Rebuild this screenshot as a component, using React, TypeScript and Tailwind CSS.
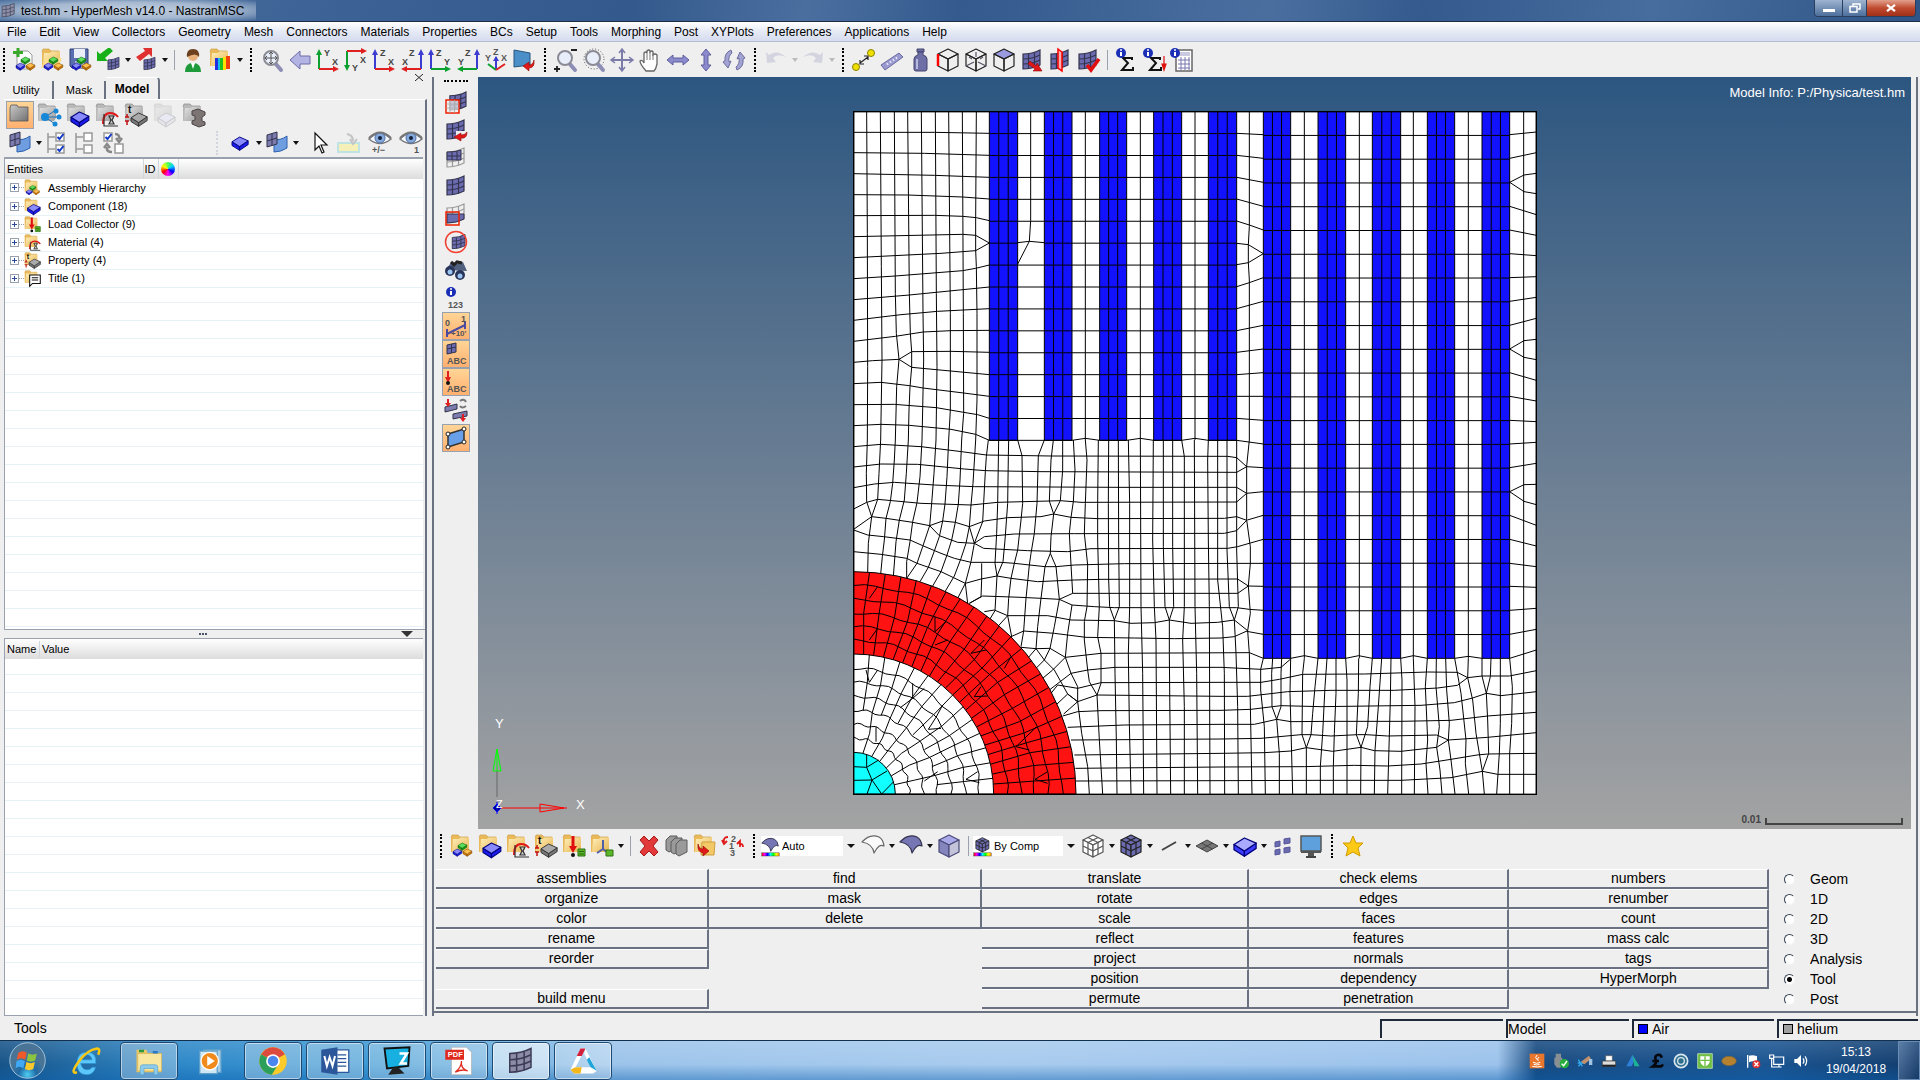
import type { ReactNode } from 'react';
import { clsx } from 'clsx';

/* ---------- icon primitives, all on a 24x24 grid ---------- */

const G = '#6b6bb0';
const INK = '#33334d';

function Svg({ children, size = 24 }: { children: ReactNode; size?: number }) {
  return (
    <svg width={size} height={size} viewBox="0 0 24 24" fill="none" className="shrink-0 overflow-visible" aria-hidden="true">
      {children}
    </svg>
  );
}

function Folder({ gray = false }: { gray?: boolean }) {
  return (
    <g>
      <path d="M1 4l1-3h6l2 2h8v13l-2 2H1z" fill={gray ? '#b9b9b9' : '#e9b95a'} />
      <path d="M3 5h6l2-2h8v12l-2 3H2z" fill={gray ? 'url(#folderGray)' : 'url(#folderGold)'} />
      <path d="M1 4l1-3h6l2 2h8" stroke={gray ? '#8a8a8a' : '#cfa04a'} strokeWidth=".7" />
    </g>
  );
}

function Slab({ x = 0, y = 0, s = 1, top = '#8a8aff', side = '#1c1cf0', edge = '#00007a' }: { x?: number; y?: number; s?: number; top?: string; side?: string; edge?: string }) {
  return (
    <g transform={`translate(${x} ${y}) scale(${s})`} stroke={edge} strokeWidth="1" strokeLinejoin="round">
      <path d="M0 5v4l8 5v-4z" fill={side} />
      <path d="M17 4v4l-9 6v-4z" fill={side} />
      <path d="M0 5l8-5 9 4-9 6z" fill={top} />
    </g>
  );
}

function Cubes() {
  return (
    <g>
      <Slab x={8} y={9} s={0.52} top="#5be05b" side="#17a017" edge="#0b5a0b" />
      <Slab x={3} y={15} s={0.52} />
      <Slab x={13} y={15} s={0.52} top="#ffc04d" side="#d87a00" edge="#7a4300" />
    </g>
  );
}

function Sheet({ x = 0, y = 0, s = 1, fill = G, line = INK }: { x?: number; y?: number; s?: number; fill?: string; line?: string }) {
  return (
    <g transform={`translate(${x} ${y}) scale(${s})`} stroke={line} strokeWidth="1.2">
      <path d="M3 6Q12 6 20 2V17Q12 21 3 21Z" fill={fill} />
      <path d="M3 11Q12 11 20 7M3 16Q12 16 20 12M8.500 6V21M14.500 4.500V19.500" />
    </g>
  );
}

const RedArrow = ({ d = 'M10 13l6 5 1-3 5 8-9 0 2-2-7-5z' }: { d?: string }) => <path d={d} fill="#e01818" stroke="#8e0a0a" strokeWidth=".6" />;

function Axes({ v, h, vl, hl, right = false, down = false }: { v: string; h: string; vl: string; hl: string; right?: boolean; down?: boolean }) {
  const x = right ? 21 : 3;
  const y = down ? 3 : 21;
  const d = right ? -1 : 1;
  const u = down ? 1 : -1;
  return (
    <g>
      <path d={`M${x} ${y}V${y + u * 15}M${x} ${y}`} stroke={v} strokeWidth="2" />
      <path d={`M${x - 3} ${y + u * 14}l3 ${u * 6} 3 ${-u * 6}z`} fill={v} />
      <path d={`M${x} ${y}H${x + d * 15}`} stroke={h} strokeWidth="2" />
      <path d={`M${x + d * 14} ${y - 3}l${d * 6} 3 ${-d * 6} 3z`} fill={h} />
      <g fontSize="9" fontWeight="700" fontFamily="Liberation Sans, sans-serif" fill="#444">
        <text x={right ? 9 : 8} y={down ? 23 : 8}>{vl}</text>
        <text x={right ? 2 : 16} y={down ? 15 : 17}>{hl}</text>
      </g>
    </g>
  );
}

function Cube({ top = 'none', front = 'none', side = 'none', line = '#222', children }: { top?: string; front?: string; side?: string; line?: string; children?: ReactNode }) {
  return (
    <g stroke={line} strokeLinejoin="round" strokeWidth="1.200">
      <path d="M2 6l10-5 10 5-10 5z" fill={top} />
      <path d="M2 6l10 5v12L2 18z" fill={front} />
      <path d="M22 6l-10 5v12l10-5z" fill={side} />
      {children}
    </g>
  );
}

const GridCube = ({ fill, line = '#222' }: { fill: string; line?: string }) => (
  <Cube top={fill} front={fill} side={fill} line={line}>
    <path d="M7 3.500l10 5V20.500M17 3.500l-10 5V20.500M2 12l10 5 10-5" />
  </Cube>
);

const Patch = () => (
  <g strokeWidth="1">
    <path d="M9 8q6 2 13-3v12q-6 4-13 4z" fill="#6f9ee0" stroke="#2c5fae" />
    <path d="M2 4l10-3v12L2 16z" fill="#7c7cae" stroke={INK} />
    <path d="M7 2.500v12M2 10l10-3" stroke={INK} />
  </g>
);

const Info = ({ x = 6, y = 5 }: { x?: number; y?: number }) => (
  <g>
    <circle cx={x} cy={y} r="5" fill="#1a2fb5" />
    <path d={`M${x} ${y - 1}v4`} stroke="#fff" strokeWidth="2" />
    <circle cx={x} cy={y - 3} r="1" fill="#fff" />
  </g>
);

const Stamp = () => (
  <g stroke="#333" strokeWidth="1.200">
    <path d="M8 21q0-11 7-11 5 0 8 4" stroke="#e01818" strokeWidth="2" />
    <path d="M9 11v12h14" />
    <path d="M14 13h5l-2 4 2 4h-5l2-4z" fill="#c9c9c9" />
  </g>
);

const Thickness = () => (
  <g>
    <Slab x={7} y={10} s={0.95} top="#aaa" side="#777" edge="#333" />
    <text x="4" y="10" fontSize="10" fontWeight="700" fontFamily="Liberation Sans, sans-serif" fill="#111">t</text>
    <path d="M3 11v3M3 22v-4M1 14h4M1 18h4" stroke="#c01010" strokeWidth="1.5" />
  </g>
);

const DownLoad = () => (
  <g>
    <path d="M11 2v12" stroke="#e01010" strokeWidth="3" />
    <path d="M7 12h8l-4 7z" fill="#e01010" />
    <circle cx="11" cy="21" r="2" fill="#111" />
    <path d="M16 15h7v7h-7z" fill="#5cb82a" stroke="#2d7010" />
    <path d="M17 17.500h5M17 20h5" stroke="#1d5008" strokeWidth=".8" />
  </g>
);

const Lens = ({ dotted = false }: { dotted?: boolean }) => (
  <g>
    {dotted && <circle cx="12" cy="11" r="10" stroke="#555" strokeDasharray="1 2" />}
    <path d="M15 15l6 7" stroke="#8d8db5" strokeWidth="4" strokeLinecap="round" />
    <circle cx="11" cy="10" r="7" fill="#e9effa" stroke="#8b8b95" strokeWidth="2" />
  </g>
);

const Eye = () => (
  <g>
    <path d="M1 8Q12-3 23 8 12 17 1 8z" fill="#f4f8ff" stroke="#777" strokeWidth="1.500" />
    <circle cx="12" cy="7" r="5" fill="#86a9dc" stroke="#4f6fa6" />
    <circle cx="12" cy="7" r="2" fill="#14213d" />
    <path d="M1 7Q12-4 23 7" stroke="#777" strokeWidth="2" />
  </g>
);

const Rainbow = () => <rect x="1" y="20" width="22" height="4" fill="url(#rainbow)" stroke="#333" strokeWidth=".5" />;
const Arc = ({ fill = '#7676b5', line = '#33334d' }: { fill?: string; line?: string }) => (
  <path d="M1 8Q9-1 18 3q4 2 5 9-5-3-10 7-1-9-12-11z" fill={fill} stroke={line} strokeWidth="1.200" strokeLinejoin="round" />
);
const T = ({ x, y, s = 9, c = '#555', children }: { x: number; y: number; s?: number; c?: string; children: string }) => (
  <text x={x} y={y} fontSize={s} fontWeight="700" fontFamily="Liberation Sans, sans-serif" fill={c}>{children}</text>
);
const Sigma = () => <path d="M18 12V10H9l5 5-6 7h11v-3" stroke="#111" strokeWidth="2" />;
const Tree = ({ on }: { on: boolean }) => (
  <g stroke="#999" strokeWidth="1.500">
    <path d="M3 2v20M3 6h7M3 18h7" />
    <path d="M11 2h8v8h-8zM11 14h8v8h-8z" fill="#fff" />
    {on && <path d="M12.500 6l2 2 4-5M12.500 18l2 2 4-5" stroke="#1238c8" strokeWidth="2" />}
  </g>
);

/* ---------- toolbar building blocks ---------- */

function Tool({ label, children, active = false }: { label: string; children: ReactNode; active?: boolean }) {
  return (
    <button
      type="button"
      aria-label={label}
      className={clsx('flex h-7 w-7 shrink-0 items-center justify-center', active && 'border border-gray-400 bg-gradient-to-b from-[#ffd596] to-[#ffb070]')}
    >
      <Svg>{children}</Svg>
    </button>
  );
}

function Caret({ dim = false, wide = false }: { dim?: boolean; wide?: boolean }) {
  return (
    <span className={clsx('flex shrink-0 justify-center', wide ? 'w-[10px]' : 'w-[9px]')}>
      <svg width="6" height="4" viewBox="0 0 6 4" aria-hidden="true">
        <path d="M0 0h6L3 4z" fill={dim ? '#bbb' : '#111'} />
      </svg>
    </span>
  );
}

const Grip = () => (
  <span className="flex w-[14px] shrink-0 justify-center">
    <span className="h-6 border-l-2 border-dotted border-black" />
  </span>
);

const Sep = () => (
  <span className="flex w-[10px] shrink-0 justify-center">
    <span className="h-5 border-l border-gray-400" />
  </span>
);

const MENUS = ['File', 'Edit', 'View', 'Collectors', 'Geometry', 'Mesh', 'Connectors', 'Materials', 'Properties', 'BCs', 'Setup', 'Tools', 'Morphing', 'Post', 'XYPlots', 'Preferences', 'Applications', 'Help'];

const RED = '#e02020';
const GREEN = '#0ca030';
const BLUE = '#3c3cd0';

function TitleBar() {
  return (
    <header className="flex h-[22px] shrink-0 items-start justify-between overflow-hidden border-b border-[#1c2c44] bg-[linear-gradient(100deg,#4a6f9e_0%,#3b6094_20%,#34598c_33%,#4a6f9f_42%,#345a8e_50%,#4a6f9f_66%,#345a8e_74%,#476d9e_86%,#2f5588_100%)]">
      <div className="flex h-[21px] items-center gap-1 bg-[radial-gradient(ellipse_at_center,#c3d0e0_0%,#a5b8d0_55%,transparent_100%)] pr-3">
        <Svg size={17}><Sheet fill="#8d90a8" line="#4b4f66" /></Svg>
        <h1 className="text-xs">test.hm - HyperMesh v14.0 - NastranMSC</h1>
      </div>
      <div className="mr-1 flex h-[17px] overflow-hidden rounded-b border border-t-0 border-[#2a3f5f] text-white">
        <button type="button" aria-label="Minimize" className="flex w-7 items-end justify-center border-r border-[#2a3f5f] bg-gradient-to-b from-[#9eb4d0] to-[#4d6f9c] pb-1"><span className="h-[3px] w-3 bg-white" /></button>
        <button type="button" aria-label="Restore" className="flex w-6 items-center justify-center border-r border-[#2a3f5f] bg-gradient-to-b from-[#9eb4d0] to-[#4d6f9c]">
          <svg width="12" height="10" viewBox="0 0 12 10" fill="none" stroke="#fff" strokeWidth="1.500" aria-hidden="true"><path d="M4 3V1h7v5H9M1 3.500h7V9H1z" /></svg>
        </button>
        <button type="button" aria-label="Close" className="flex w-12 items-center justify-center bg-gradient-to-b from-[#e0a08c] via-[#c04a30] to-[#a03018]">
          <svg width="10" height="8" viewBox="0 0 11 9" stroke="#fff" strokeWidth="2.500" aria-hidden="true"><path d="M1 1l9 7M10 1L1 8" /></svg>
        </button>
      </div>
    </header>
  );
}

function TopToolbar() {
  return (
    <div className="flex h-[35px] shrink-0 items-center overflow-hidden">
      <span className="-ml-[3px] flex"><Grip /></span>
      <Tool label="New"><path d="M4 3h11l4 4v14H4z" fill="#fff" stroke="#999" /><path d="M5 0v9M0 4.500h10" stroke="#3aa82a" strokeWidth="3" /><Cubes /></Tool>
      <Tool label="Open"><Folder /><path d="M0 20l5-10h16l-3 8z" fill="#ffdf8e" /><Cubes /></Tool>
      <Tool label="Save"><path d="M1 1h18v19H3l-2-2z" fill="#5a6fb0" stroke="#2f3f77" /><path d="M5 1h11v9H5z" fill="#e9eef9" /><path d="M6 13h9v7H6z" fill="#aab6d6" /><Cubes /></Tool>
      <Tool label="Import"><Sheet x={9} y={8} s={0.65} /><path d="M13 0l3 3-8 7 3 3H0V3l3 3 8-6z" fill="#18b018" /></Tool><Caret />
      <Tool label="Export"><Sheet x={8} y={8} s={0.65} /><path d="M9 0h9v9l-3-3-9 7-4-4 9-6z" fill="#e03030" /></Tool><Caret />
      <Sep />
      <Tool label="User"><path d="M4 24q0-9 8-9t8 9z" fill="#1f9a3a" /><path d="M10 15l2 6 2-6z" fill="#fff" /><circle cx="12" cy="8" r="5" fill="#e8b07c" /><path d="M6 9Q5 1 12 1t6 8q-3-5-12 0z" fill="#6d4020" /></Tool>
      <Tool label="Load results"><Folder /><path d="M8 10v12h3V10z" fill="#18c0e8" /><path d="M11 10v12h3V10z" fill="#20c020" /><path d="M14 9v13h3V9z" fill="#ffe000" /><path d="M17 8v13h4V8z" fill="#f04010" /><path d="M6 10v12h3V10z" fill="#2030e0" /></Tool><Caret />
      <Grip />
      <Tool label="Fit"><Lens /><path d="M11 4v12M5 10h12M9 6l2-2 2 2M9 14l2 2 2-2M7 8l-2 2 2 2M15 8l2 2-2 2" stroke="#555" /></Tool>
      <Tool label="Previous view"><path d="M2 12l10-9v5h10v8H12v5z" fill="#b4b4e4" stroke="#6c6ca8" /></Tool>
      <Tool label="XY top"><Axes v={GREEN} h={RED} vl="Y" hl="X" /></Tool>
      <Tool label="XY bottom"><Axes v={GREEN} h={RED} vl="Y" hl="X" down /></Tool>
      <Tool label="XZ left"><Axes v={BLUE} h={RED} vl="Z" hl="X" /></Tool>
      <Tool label="XZ right"><Axes v={BLUE} h={RED} vl="Z" hl="X" right /></Tool>
      <Tool label="YZ rear"><Axes v={BLUE} h={GREEN} vl="Z" hl="Y" /></Tool>
      <Tool label="YZ front"><Axes v={BLUE} h={GREEN} vl="Z" hl="Y" right /></Tool>
      <Tool label="Isometric"><path d="M12 22V9" stroke={BLUE} strokeWidth="2" /><path d="M9 13l3-5 3 5z" fill={BLUE} /><path d="M12 22l-8-6" stroke={GREEN} strokeWidth="2" /><path d="M12 22l9-6" stroke={RED} strokeWidth="2" /><T x={9} y={7}>Z</T><T x={1} y={13}>Y</T><T x={17} y={13}>X</T></Tool>
      <Tool label="Reverse view"><path d="M2 2l16 3v12L2 19z" fill="#4b8fc8" stroke="#28557c" /><RedArrow d="M22 12q1 8-5 8v3l-6-5 6-4v3q4 0 5-5z" /></Tool>
      <Grip />
      <Tool label="Zoom in out"><Lens /><path d="M17 2h6M0 21h6M3 18v6" stroke="#222" strokeWidth="1.800" /></Tool>
      <Tool label="Circle zoom"><Lens dotted /></Tool>
      <Tool label="Center"><path d="M12 2v20M2 12h20" stroke="#7c7ca8" strokeWidth="2" /><path d="M9 5l3-4 3 4M9 19l3 4 3-4M5 9l-4 3 4 3M19 9l4 3-4 3" stroke="#7c7ca8" strokeWidth="1.500" /></Tool>
      <Tool label="Pan"><path d="M8 23q-6-7-6-10 2-2 4 2V5q2-2 3 0v-2q2-2 3 0v1q2-2 3 0v3q2-2 4 0v9q-1 5-3 7z" fill="#fff" stroke="#666" strokeWidth="1.300" /><path d="M9 5v7M12 4v8M15 6v6" stroke="#777" /></Tool>
      <Tool label="Rotate left right"><path d="M1 12l6-5v3h10V7l6 5-6 5v-3H7v3z" fill="#8a8acd" stroke="#5e5e9c" /></Tool>
      <Tool label="Rotate up down"><path d="M12 1l5 6h-3v10h3l-5 6-5-6h3V7H7z" fill="#8a8acd" stroke="#5e5e9c" /></Tool>
      <Tool label="Spin"><path d="M9 2Q2 5 3 13l-2 1 5 6 3-7-2 1Q6 8 10 5zM15 22q7-3 6-11l2-1-5-6-3 7 2-1q1 6-3 9z" fill="#a4a4d4" stroke="#6c6ca0" /></Tool>
      <Grip />
      <Tool label="Undo"><path d="M3 15L2 4l3 3q8-6 17 2-9-4-13 1l3 4z" fill="#d4d4e0" /></Tool><Caret dim />
      <Tool label="Redo"><path d="M21 15l1-11-3 3Q11 1 2 9q9-4 13 1l-3 4z" fill="#d4d4e0" /></Tool><Caret dim />
      <Grip />
      <Tool label="Distance"><path d="M8 15l8-6M8 12v4h4M12 8h4v4" stroke="#222" strokeWidth="1.200" /><circle cx="4" cy="19" r="3.500" fill="#f0e000" stroke="#8a8000" /><circle cx="19" cy="5" r="3.500" fill="#f0e000" stroke="#8a8000" /></Tool>
      <Tool label="Measure"><path d="M1 17L19 5l4 4L5 22z" fill="#9a9ad0" stroke="#6a6aa0" /><path d="M7 15l1 2M10 13l1 2M13 11l1 2M16 9l1 2" stroke="#e6e6ff" strokeWidth="1.500" /></Tool>
      <Tool label="Mass"><path d="M9 1h7v3H9z" fill="#6f6fa8" stroke="#44446f" /><path d="M10 4h5v3q4 1 4 4v10q0 2-2 2H8q-2 0-2-2V11q0-3 4-4z" fill="#6f6fa8" stroke="#44446f" /><path d="M9 11v10" stroke="#b9b9e0" strokeWidth="2" /></Tool>
      <Tool label="Edges"><Cube><path d="M2 6v12" stroke="#f00" strokeWidth="2.500" /></Cube></Tool>
      <Tool label="Features"><Cube><path d="M12 4v5M2 18l8-4M22 18l-8-4M5 9l3 2M19 9l-3 2" stroke="#556" /></Cube></Tool>
      <Tool label="Faces"><Cube top="#9a9ae0" /></Tool>
      <Tool label="Normals"><Sheet /><RedArrow /></Tool>
      <Tool label="Penetration"><Sheet /><path d="M10 1l4 3v19l-4-3z" fill="#f7b0b0" stroke="#f00" strokeWidth="1.500" /></Tool>
      <Tool label="Check elements"><Sheet /><path d="M11 17l4 5 8-11" stroke="#e01010" strokeWidth="3.500" /></Tool>
      <Sep />
      <Tool label="Summary"><Sigma /><Info x={7} /></Tool>
      <Tool label="Load summary"><Sigma /><Info x={6} /><path d="M22 8v9M20 16l2 6 2-6z" stroke="#e01010" strokeWidth="1.200" fill="#e01010" /></Tool>
      <Tool label="Calculator"><path d="M6 2h16v21H6z" fill="#fff" stroke="#666" strokeWidth="1.500" /><path d="M8 4h12v4H8z" fill="#c9c9e0" /><path d="M8 12h12M8 16h12M8 20h12M11 9v13M15 9v13M19 9v13" stroke="#7777b0" /><Info x={5} /></Tool>
    </div>
  );
}

/* ---------- model browser ---------- */

const ENTITIES: { name: string; icon: ReactNode }[] = [
  { name: 'Assembly Hierarchy', icon: <Cubes /> },
  { name: 'Component (18)', icon: <Slab x={5} y={9} s={1.05} /> },
  { name: 'Load Collector (9)', icon: <DownLoad /> },
  { name: 'Material (4)', icon: <Stamp /> },
  { name: 'Property (4)', icon: <Thickness /> },
  { name: 'Title (1)', icon: <path d="M8 7h15v12H12l-4 4v-4H8zM11 11h9M11 14h9" fill="#fff" stroke="#111" strokeWidth="1.500" /> },
];

const STRIPES = 'bg-white bg-[repeating-linear-gradient(to_bottom,transparent_0,transparent_17px,#e6f2f6_17px,#e6f2f6_18px)]';

function Browser() {
  return (
    <aside className="flex w-[427px] shrink-0 flex-col pl-1">
      <div role="tablist" className="relative flex h-[22px] shrink-0 text-[11px]">
        <button role="tab" type="button" className="mt-1 w-[50px] border-r-2 border-gray-500 pr-1">Utility</button>
        <button role="tab" type="button" className="mt-1 w-[52px] border-r-2 border-gray-500">Mask</button>
        <button role="tab" type="button" className="w-[54px] rounded-tr-sm border-t border-r-2 border-t-white border-r-gray-500 text-xs font-bold">Model</button>
        <button type="button" aria-label="Close browser" className="absolute -top-1 right-1 h-2 w-2">
          <svg width="8" height="7" viewBox="0 0 8 7" stroke="#222" aria-hidden="true"><path d="M0 0l8 7M8 0L0 7" /></svg>
        </button>
      </div>
      <div className="flex min-h-0 flex-1 flex-col border-t border-r-2 border-t-white border-r-gray-500">
        <div className="flex h-[29px] shrink-0 items-center gap-px pl-[2px]">
          <Tool label="Model view" active><path d="M2 5l1-3h6l1 2h10v14H2z" fill="url(#folderDark)" stroke="#555" strokeWidth=".8" /></Tool>
          <Tool label="Assembly view"><Folder gray /><path d="M8 14l11-7M8 14h14M8 14l10 7" stroke="#2070b8" /><circle cx="8" cy="14" r="4" fill="#1787d8" /><circle cx="19" cy="8" r="2.500" fill="#1787d8" /><circle cx="22" cy="14" r="2.500" fill="#1787d8" /><circle cx="18" cy="21" r="2.500" fill="#1787d8" /></Tool>
          <Tool label="Component view"><Folder gray /><Slab x={5} y={9} s={1.05} /></Tool>
          <Tool label="Material view"><Folder gray /><Stamp /></Tool>
          <Tool label="Property view"><Folder gray /><Thickness /></Tool>
          <Tool label="Include view"><g opacity=".3"><Folder gray /><Slab x={5} y={10} top="#ddf" side="#ccd" edge="#778" /></g></Tool>
          <Tool label="Section view"><Folder gray /><path d="M10 8l6-2 7 3v3l-3 2v4l3 1v3l-6 2-7-3v-3l3-1v-4l-3-1z" fill="#7d7474" stroke="#4c4545" /></Tool>
        </div>
        <div className="flex h-7 shrink-0 items-center">
          <div className="flex flex-1 items-center pl-[2px]">
            <Tool label="Display"><Patch /></Tool><Caret />
            <Tool label="Select all"><Tree on /></Tool>
            <Tool label="Select none"><Tree on={false} /></Tool>
            <Tool label="Reverse"><path d="M3 2h8v8H3zM14 13h8v9h-8z" fill="#fff" stroke="#999" strokeWidth="1.500" /><path d="M4.500 6l2 2 4-5" stroke="#1238c8" strokeWidth="2" /><path d="M14 3q5 0 4 5M15 7l3 4 3-4M11 21q-6 0-5-5M3 17l3-4 3 4" stroke="#888" strokeWidth="2.500" /></Tool>
          </div>
          <span className="mr-2 h-6 border-l-2 border-dotted border-gray-300" />
          <Tool label="Components"><Slab x={4} y={6} s={0.95} /></Tool><Caret />
          <Tool label="Elements and geometry"><Patch /></Tool><Caret />
          <div className="flex items-center gap-[3px] pl-1">
            <Tool label="Selector"><path d="M9 2v17l4-4 3 7 2-1-3-7h6z" fill="#fff" stroke="#111" strokeWidth="1.200" /></Tool>
            <Tool label="Add to panel"><path d="M1 12h21v9H1z" fill="#f5efb8" stroke="#bfe3e3" strokeWidth="2" /><path d="M10 3q6 1 6 7M13 8l3 5 4-5" stroke="#c4c4c4" strokeWidth="2" /></Tool>
            <Tool label="Show hide"><Eye /><T x={4} y={22}>+/−</T></Tool>
            <Tool label="Isolate"><Eye /><T x={15} y={22}>1</T></Tool>
          </div>
        </div>
        <div className={clsx('mr-[2px] min-h-0 flex-[472] border-t-2 border-l border-gray-400', STRIPES)}>
          <table className="w-full table-fixed border-collapse text-left text-[11px]">
            <colgroup><col className="w-[138px]" /><col className="w-[15px]" /><col className="w-[20px]" /><col /></colgroup>
            <thead>
              <tr className="h-5 bg-gradient-to-b from-white to-[#dcdcdc]">
                <th className="border-r border-gray-300 pl-[2px] leading-4 font-normal">Entities</th>
                <th className="border-r border-gray-300 pl-px leading-4 font-normal">ID</th>
                <th className="border-r border-gray-300" aria-label="Color"><div className="mx-auto h-[14px] w-[14px] rounded-full bg-[conic-gradient(#5f5,#0cf,#00f,#f0f,#f00,#ff0,#5f5)]" /></th>
                <th aria-label="Value" />
              </tr>
            </thead>
            <tbody className="bg-white">
              {ENTITIES.map((e) => (
                <tr key={e.name} className="h-[18px] border-b border-[#e6f2f6]">
                  <td colSpan={4} className="p-0">
                    <div className="flex h-[17px] items-center pl-[5px]">
                      <button type="button" aria-label={`Expand ${e.name}`} className="flex h-[9px] w-[9px] items-center justify-center border border-gray-400 bg-white">
                        <svg width="5" height="5" viewBox="0 0 5 5" stroke="#2a4a9a" aria-hidden="true"><path d="M0 2.500h5M2.500 0v5" /></svg>
                      </button>
                      <span className="w-[5px] border-t border-dotted border-gray-400" />
                      <Svg size={17}><Folder />{e.icon}</Svg>
                      <span className="pl-[7px] leading-4">{e.name}</span>
                    </div>
                  </td>
                </tr>
              ))}
            </tbody>
          </table>
        </div>
        <div className="flex h-[9px] shrink-0 items-center border-t border-gray-400">
          <span className="flex flex-1 justify-center"><span className="w-2 border-t-2 border-dotted border-gray-600" /></span>
          <svg width="12" height="6" viewBox="0 0 12 6" className="mr-3" aria-hidden="true"><path d="M0 0h12L6 6z" fill="#333" /></svg>
        </div>
        <div className={clsx('mr-[2px] min-h-0 flex-[378] border-y border-l border-gray-400', STRIPES)}>
          <div className="flex h-5 items-center bg-gradient-to-b from-white to-[#dcdcdc] text-[11px] leading-4">
            <span className="w-[35px] border-r border-gray-300 pl-[2px]">Name</span>
            <span className="pl-[2px]">Value</span>
          </div>
        </div>
      </div>
    </aside>
  );
}

/* ---------- mesh ---------- */

const seq = (n: number, f: (i: number) => string) => Array.from({ length: n }, (_, i) => f(i)).join('');

// Element edges, three units to a pixel; each block has its own origin.
const UPPER_LEFT = [
  '77,35 79,400 80,800 79,1020', '118,35 121,500 123,780 121,900 119,1020', '160,35 163,580 166,700 174,778 167,860 163,1020',
  '200,35 205,580 208,700 212,755 212,802 207,860 204,930 202,1020', '241,35 246,640 248,780 245,930 243,1020', '283,35 286,580 288,800 285,1020',
  '323,35 328,640 328,930 323,1020', '364,35 367,640 368,940 362,1020', '406,35 404,360 404,450 406,500 408,640 408,900 404,1020',
  '38,97 280,97 445,100', '38,158 250,160 445,166', '38,221 280,226 445,232', '38,284 200,285 365,291 445,297', '38,347 280,346 365,349 406,353 445,362',
  '38,410 365,403 404,406 445,429 404,452 300,460 38,473', '38,536 163,528 365,512 404,505 445,495', '38,599 205,585 445,561', '38,661 180,644 290,634 445,626',
  '38,724 163,709 246,696 330,692 445,691', '38,787 95,782 174,778 212,755 330,754 445,757', '174,778 212,802 445,824', '38,851 120,847 205,857 246,864 368,879 445,889',
  '38,914 160,913 286,923 368,937 410,944 445,955', '38,977 120,973 205,976 330,988 404,1003 445,1021', '38,1040 120,1033 240,1040 362,1055 436,1065 630,1068 1160,1069 1187,1073 1217,1100',
  '38,1101 120,1092 230,1093 370,1107 433,1112 600,1115 1187,1117 1217,1100', '569,35 569,362 565,424 530,492', '530,428 565,424 610,428',
  '733,35 733,1020', '898,35 898,1020', '1062,35 1062,1020', '445,1021 530,1021 610,1021 693,1021 733,1015 776,1021 857,1021 898,1015 938,1021 1022,1021 1062,1015 1102,1021 1187,1021',
];

const LOWER_LEFT = [
  '79,0 76,100 77,185 92,230 82,310 80,397', '119,0 114,100 110,178 92,230', '163,0 160,60 155,130 148,185 135,235 130,300 124,350 119,403', '202,0 196,100 190,180 175,240 165,305 157,410',
  '243,0 237,110 228,188 215,245 207,305 197,365 197,415', '285,0 279,100 272,190 266,257 245,320 228,370 197,415', '323,0 318,110 312,192 305,243 295,290 280,333 262,382 237,425',
  '362,0 357,120 352,192 343,247 332,300 318,345 300,395 275,438', '404,0 396,130 390,195 385,260 375,310 360,355 340,408 312,455', '385,260 400,310', '442,0 436,50 433,95 428,188 425,245 400,310 390,365 373,430 350,475',
  '38,143 100,132 160,127 280,135 400,140 840,142 1187,142 1217,160', '38,207 77,187 110,178 240,190 390,195 470,187 625,183 658,182 720,187 1187,186 1217,160',
  '38,268 92,230 135,235 215,247 266,257 305,243 343,247 385,260 430,243 500,233 600,230 638,222 690,232 770,236 1150,235 1187,230 1217,241', '38,270 80,285 128,290 207,300 245,317 300,340 340,355 390,367 480,367 520,370 612,380 645,380 700,375 850,371 1267,370',
  '266,257 295,287 350,307 400,310 430,290 520,282 700,281 1150,280 1187,272 1217,241', '400,310 428,325 560,332 680,335 750,326 1160,325 1190,320 1228,309', '612,380 628,340 645,380',
  '38,335 120,343 197,355 228,370 300,395 373,430 420,417 468,408 510,415 590,425 700,420 780,418 1190,417 1222,438', '385,490 425,468 540,472 600,475 655,478 695,460 1190,460 1222,438', '655,478 693,495 760,500 820,503 1187,503',
  '430,515 460,510 500,527 620,527 690,540 820,542 870,550 940,548 985,540 1050,550 1130,547 1180,540 1220,572', '510,590 548,573 640,580 735,592 880,594 1000,596 1140,594 1180,590 1220,572', '540,622 585,626 627,625 673,652 780,640 1225,638',
  '473,0 470,190 467,280 462,370 468,408', '503,0 502,50 500,190 492,300 486,365 468,408 462,512 445,540', '530,0 543,47 545,190 540,240 530,330 520,370 510,415 503,475 500,527 470,560', '500,527 512,590', '610,0 592,47 588,190 580,280 570,340 565,375 555,475 548,573 540,620',
  '637,0 630,60 625,183 638,222 630,290 628,340', '665,0 665,90 658,182 638,222', '697,0 702,90 697,185 690,232 685,280 690,375 695,460', '733,0 738,60 733,190 730,280 740,375 738,500 730,545 730,600 740,690 745,725 768,765',
  '772,0 770,190 770,300 775,500 770,590 780,640 780,730 768,765', '803,0 802,190 803,420 806,500 820,540', '832,0 833,300 835,500 820,540 822,700 826,900 828,1062', '862,0 866,190 866,500 862,640 865,850 870,1062', '898,0 900,500 905,700 908,1062',
  '937,0 935,300 940,500 945,600 948,1062', '967,0 967,320 972,500 985,540', '995,0 995,320 998,500 985,540 985,640 989,1062', '1022,0 1030,50 1030,500 1025,600 1030,800 1030,1062', '1060,0 1062,500 1067,700 1070,1062', '1102,0 1100,60 1102,300 1105,500 1107,1062',
  '1130,0 1130,420 1145,560 1150,700 1151,1062', '1158,0 1158,330 1165,500 1180,540', '1187,0 1187,330 1192,500 1180,540 1185,640 1190,800 1192,1062', '1225,0 1217,78 1217,240 1228,320 1228,370 1222,438 1228,520 1220,572 1225,640 1230,900 1233,1062',
  '373,430 380,490', '422,370 422,420 420,470 385,490', '612,380 600,475 590,560 585,626 560,655', '645,380 655,478 640,560 627,625 610,660 585,685', '693,495 680,580 673,652 635,690 605,715', '585,626 610,660 640,690 680,762 710,785', '673,652 690,700 710,740 710,785 668,822',
  '625,750 690,700 740,690 822,682 1140,682', '630,760 650,735 710,745 780,728 1140,727', '645,795 680,762 710,785 768,765 1140,769', '665,828 710,815 780,812 1140,811', '680,862 850,855 1140,853', '690,900 1140,897', '700,945 1140,940', '703,985 1140,981', '705,1023 1140,1022',
  '710,785 722,880 740,980 745,1062', '768,765 775,900 785,1062',
];

const UPPER_RIGHT = [
  '47,100 127,104', '47,166 127,175', '47,232 127,247', '47,297 127,319', '47,363 85,375 127,390', '47,430 82,434 127,461 82,488 47,494', '47,560 85,548 127,533', '47,626 127,604', '47,692 127,676', '47,757 127,747', '47,824 127,818', '47,889 127,889', '47,955 127,961', '47,1021 127,1032', '77,1100 127,1103',
  '85,35 85,380 82,434 82,488 85,540 85,1020', '866,104 946,96', '866,175 946,158', '946,220 909,225 866,247 909,275 946,281', '866,319 946,344', '866,390 946,406', '866,461 946,467', '866,533 946,530', '866,604 946,592', '866,676 946,655',
  '946,718 909,722 866,747 909,772 946,779', '866,818 946,841', '866,889 946,903', '866,961 946,965', '866,1032 946,1027', '866,1103 946,1090', '908,35 908,2082', '250,35 250,1675', '415,35 415,1675', '577,35 577,1675', '742,35 742,1675',
];

const LOWER_RIGHT = [
  '77,160 127,155', '79,240 127,226', '88,309 127,298', '82,438 127,439', '47,503 85,508 127,511', '77,574 127,583', '85,638 127,655', '946,133 909,134 866,155 909,184 946,194', '866,226 946,256', '866,298 946,318', '866,370 946,380', '866,439 946,442', '866,511 946,505', '866,583 946,568', '866,655 946,630',
  '209,655 250,647 291,655', '374,655 413,647 454,655', '539,655 577,647 619,655', '701,655 742,649 783,655',
  '0,682 120,688 180,682 209,657', '0,727 120,727 175,718 245,703 430,702 620,696 709,697 740,713 783,708 865,708 946,692', '0,769 80,769 200,755 330,751 520,751 650,744 709,736 740,713', '0,811 90,808 155,800 180,797 300,800 600,796 700,788 755,774 796,760 840,767 946,755',
  '0,853 100,853 167,838 210,845 330,844 540,844 690,841 800,828 946,817', '0,897 120,895 240,884 270,884 330,888 410,884 435,884 500,888 647,885 682,900 800,892 946,878', '0,940 130,938 210,933 256,923 335,934 420,922 460,932 540,934 647,922 682,900', '0,981 250,980 400,976 500,978 600,972 690,958 768,945 800,942 946,940', '0,1022 300,1021 540,1021 690,1013 784,994 830,1003 946,1003',
  '127,655 119,688 119,750 130,860 133,1062', '155,655 152,700 153,800 167,838 175,940 175,1062', '182,655 180,700 180,800 167,838', '209,655 207,760 210,870 215,1062', '250,655 245,700 243,884 256,923 256,1062', '291,655 282,740 275,820 270,884 256,923', '318,655 312,740 305,880 298,980 298,1062', '345,655 345,760 340,880 337,980 337,1062',
  '374,655 378,720 378,1062', '413,655 412,760 406,884 420,922 419,1062', '454,655 447,740 440,860 420,922', '482,655 472,800 462,930 460,1062', '510,655 508,780 500,1062', '539,655 543,720 542,1062', '577,655 582,800 580,1062', '619,655 613,740 620,900 615,970 621,1062', '646,655 645,740 655,860 647,922 657,990 663,1062',
  '674,655 677,750 685,850 682,900 690,960 702,1062', '701,655 720,760 735,900 733,970 743,1062', '742,655 740,713 755,780 765,880 784,994', '783,655 783,708 796,760 800,840 803,940 784,994 790,1062', '810,655 808,710 796,760', '838,655 838,850 835,940 827,1062', '866,655 874,740 872,850 866,940 866,1062',
];

const toPath = (lines: string[]) => lines.map((l) => `M${l.split(' ').join('L')}`).join('');

// Quarter rings around the lower left corner of the plate.
const polar = (r: number, deg: number) => {
  const a = (deg * Math.PI) / 180;
  return `${(38 + r * Math.cos(a)).toFixed(1)},${(1062 - r * Math.sin(a)).toFixed(1)}`;
};
const sector = (r: number) => `M38,1062L${38 + r},1062A${r},${r} 0 0 0 38,${1062 - r}Z`;
const arcs = (from: number, step: number, count: number) => seq(count, (i) => {
  const r = from + step * i;
  return `M${seq(31, (k) => `${k ? 'L' : ''}${polar(r + 4 * Math.sin(k * 1.3 + i * 2), k * 3)}`)}`;
});
const spokes = (r0: number, r1: number, count: number, bend: number) =>
  seq(count - 1, (i) => {
    const d = (90 / count) * (i + 1);
    return `M${polar(r0, d)}L${polar((r0 + r1) / 2, d + bend * Math.sin(i))}L${polar(r1, d)}`;
  });

const RING = arcs(461, 41, 5) + spokes(420, 667, 22, 1) + toPath(['85,475 110,440', '85,600 110,565', '282,575 315,545', '282,575 282,530', '282,615 320,600', '390,640 430,600', '390,640 435,630', '400,770 420,740', '400,770 440,768', '490,685 510,650', '525,920 585,862', '525,920 565,930', '582,1018 620,995', '582,1018 620,1030']);
const CORE = arcs(167, 42, 6) + spokes(251, 420, 14, 1) + spokes(125, 251, 7, 2) + toPath(['215,775 215,730', '215,775 250,745', '285,832 305,795', '285,832 262,868', '262,868 300,865', '178,803 215,775', '105,905 105,860', '85,727 75,690', '85,727 110,690', '250,1023 290,995', '375,1018 410,995', '375,1018 415,1028']);
const CENTER = toPath(['38,980 77,982 113,960', '77,945 77,982 93,1020 78,1062', '38,1021 93,1020 138,993', '93,1020 122,1062 158,1025']);

const SHORT_BARS = [[445, 530], [610, 693], [776, 857], [938, 1022], [1102, 1187]];
const LONG_BARS = [[127, 209], [291, 374], [454, 539], [619, 701], [783, 866]];

function bars(list: number[][], bottom: number) {
  return list.map(([a, b]) => (
    <g key={a}>
      <path d={`M${a} 35H${b}V${bottom}H${a}Z`} fill="#1212ff" />
      <path d={`M${a + (b - a) / 3} 35V${bottom}M${b - (b - a) / 3} 35V${bottom}`} />
    </g>
  ));
}

function Mesh() {
  return (
    <svg width="684" height="684" viewBox="0 0 2052 2052" fill="none" stroke="#000" strokeWidth="3" className="shrink-0" role="img" aria-label="Finite element mesh">
      <path d="M2 2H2050V2050H2Z" fill="#fff" />
      <g transform="translate(-36 -33)">
        {bars(SHORT_BARS, 1021)}
        <path d={seq(14, (i) => `M445 ${35 + 65.75 * (i + 1)}H${i === 5 ? 530 : 1187}`) + 'M610 429.500H1187'} />
        <path d={toPath(UPPER_LEFT)} />
      </g>
      <g transform="translate(1104 -33)">
        {bars(LONG_BARS, 1675)}
        <path d={seq(22, (i) => `M127 ${(35 + 71.3 * (i + 1)).toFixed(1)}H866`)} />
        <path d={toPath(UPPER_RIGHT)} />
      </g>
      <g transform="translate(1104 987)"><path d={toPath(LOWER_RIGHT)} /></g>
      <g transform="translate(-36 987)">
        <path d={toPath(LOWER_LEFT)} />
        <path d={sector(667)} fill="#ff1212" /><path d={RING} />
        <path d={sector(420)} fill="#fff" /><path d={CORE} />
        <path d={sector(125)} fill="#12ffff" /><path d={CENTER} />
      </g>
      <path d="M2 2H2050V2050H2Z" strokeWidth="4" />
    </svg>
  );
}

function Viewport() {
  return (
    <section className="relative mr-[5px] flex min-w-0 flex-1 items-center justify-center overflow-hidden bg-gradient-to-b from-[#2c5680] to-[#a3a3a3]">
      <Mesh />
      <p className="absolute top-2 right-[6px] text-[13px] leading-4 text-white">Model Info: P:/Physica/test.hm</p>
      <svg width="110" height="110" viewBox="0 0 110 110" fill="none" className="absolute bottom-2 left-2" role="img" aria-label="Global axes">
        <path d="M11 60V38M7 60L11 38l4 22z" stroke="#0f0" /><path d="M11 60v26" stroke="#666" />
        <path d="M11 97h70M54 93l24 4-24 4z" stroke="#f00" />
        <path d="M7 97l4-4 4 4-4 4z" fill="#008" stroke="#00f" /><path d="M11 91v12" stroke="#00f" />
        <g fontSize="13" fontFamily="Liberation Sans, sans-serif" fill="#fff"><text x="9" y="17">Y</text><text x="90" y="98">X</text><text x="10" y="97" fontSize="11">Z</text></g>
      </svg>
      <div className="absolute right-2 bottom-[3px] flex items-end gap-1 text-[#444]">
        <span className="text-[10px] leading-3 font-bold">0.01</span>
        <span className="mb-[1px] h-[7px] w-[138px] border-x-2 border-b-2 border-[#444]" />
      </div>
    </section>
  );
}

const SideTools = () => (
  <div className="flex w-11 shrink-0 flex-col items-center">
    <span className="mt-[3px] mb-[6px] w-6 border-t-2 border-dotted border-black" />
    <Tool label="Mask"><Sheet s={0.95} x={3} /><path d="M2 10h13v13H2z" fill="#efefefb0" stroke="#f02000" strokeWidth="1.500" /><path d="M6 10v13M10.500 10v13M2 14h13M2 18h13" stroke="#aaa" strokeWidth=".8" /></Tool>
    <Tool label="Reverse all"><Sheet /><path d="M12 13h9v8h-9z" fill="#efefef" /><RedArrow d="M23 14q0 7-6 6v3l-7-4 7-4v2q4 0 6-3z" /></Tool>
    <Tool label="Unmask adjacent"><Sheet fill="#efefef" line="#999" /><path d="M3 6q9 0 14-2v10H3z" fill={G} stroke={INK} /><path d="M8 6v8M13 5v9M3 10h14" stroke={INK} /></Tool>
    <Tool label="Unmask all"><Sheet /></Tool>
    <Tool label="Mask not shown"><Sheet fill="#efefef" line="#999" /><path d="M3 12h17v5q-8 4-17 4z" fill={G} stroke={INK} /><path d="M2 10h13v13H2z" stroke="#f02000" strokeWidth="1.500" /></Tool>
    <Tool label="Spherical clipping"><Sheet s={0.75} x={6} y={3} /><circle cx="12" cy="12" r="10.500" stroke="#f04030" strokeWidth="1.500" /></Tool>
    <Tool label="Find"><path d="M2 12l6-9 5 3 6-2 4 9" fill="#50607f" /><path d="M7 4l3 3 3-3 5 1" stroke="#222" strokeWidth="3" /><circle cx="6" cy="13" r="5" fill="#28345a" /><circle cx="16" cy="17" r="5" fill="#28345a" /><circle cx="6" cy="14" r="2.500" fill="#9cc4f0" /><circle cx="16" cy="18" r="2.500" fill="#9cc4f0" /></Tool>
    <Tool label="Numbers"><Info x={7} y={6} /><T x={4} y={22}>123</T></Tool>
    <Tool label="Vectors" active><path d="M3 20L21 11M3 15v8M21 7v8" stroke="#4b4ba0" strokeWidth="2" /><T x={1} y={12}>0</T><T x={17} y={8}>1</T><T x={7} y={22} s={8}>+10'</T></Tool>
    <Tool label="Element handles" active><path d="M3 3l9-2v9l-9 2z" fill={G} stroke={INK} /><path d="M7.500 2v9M3 7l9-2" stroke={INK} /><T x={3} y={22}>ABC</T></Tool>
    <Tool label="Load handles" active><path d="M4 1v7" stroke={RED} strokeWidth="2" /><path d="M1 7h6l-3 6z" fill={RED} /><circle cx="4" cy="13" r="2" fill="#111" /><T x={3} y={22}>ABC</T></Tool>
    <Tool label="Load visualization"><path d="M1 9l12-3v5L1 14zM9 16l14-3v5L9 21z" fill="#7c7cae" stroke={INK} /><path d="M4 1v6M19 16v6" stroke={RED} strokeWidth="2" /><path d="M1 5h6L4 9zM16 20h6l-3 4z" fill={RED} /><path d="M16 3q4-3 6 1M22 8q-4 3-6 0" stroke="#777" strokeWidth="2" /></Tool>
    <Tool label="Shrink" active><path d="M4 8l16-5v13L4 21z" fill="#67a0e8" stroke="#333" strokeWidth="1.500" /><g fill="#fff" stroke="#222"><circle cx="4" cy="8" r="2" /><circle cx="20" cy="3" r="2" /><circle cx="20" cy="16" r="2" /><circle cx="4" cy="21" r="2" /></g></Tool>
  </div>
);

function Combo({ label, value, icon, wide = false }: { label: string; value: string; icon: ReactNode; wide?: boolean }) {
  return (
    <div className={clsx('flex h-5 shrink-0 items-center bg-white', wide ? 'w-[106px]' : 'w-[98px]')}>
      <Svg size={19}>{icon}</Svg>
      <select aria-label={label} className="h-5 min-w-0 flex-1 appearance-none bg-transparent pl-[2px] text-[11px] leading-5">
        <option>{value}</option>
      </select>
      <span className="flex h-5 w-4 items-center justify-center bg-[#efefef]">
        <svg width="8" height="4" viewBox="0 0 8 4" aria-hidden="true"><path d="M0 0h8L4 4z" fill="#111" /></svg>
      </span>
    </div>
  );
}

function BottomToolbar() {
  return (
    <div className="flex h-[34px] shrink-0 items-center overflow-hidden">
      <Grip />
      <Tool label="Assemblies"><Folder /><Cubes /></Tool>
      <Tool label="Components"><Folder /><Slab x={5} y={9} s={1.05} /></Tool>
      <Tool label="Materials"><Folder /><Stamp /></Tool>
      <Tool label="Properties"><Folder /><Thickness /></Tool>
      <Tool label="Load collectors"><Folder /><DownLoad /></Tool>
      <Tool label="System collectors"><Folder /><path d="M13 6v9l-6 4M13 15l4 3" stroke="#4f5fa8" strokeWidth="2" /><path d="M16 16h7v6h-7z" fill="#5cb82a" stroke="#2d7010" /></Tool><Caret />
      <Sep />
      <Tool label="Delete"><path d="M3 6l4-4 5 5 5-5 4 4-5 6 5 6-4 4-5-5-5 5-4-4 5-6z" fill="#e23a3a" stroke="#a81a1a" /></Tool>
      <Tool label="Card edit"><g fill="#9a9a9a" stroke="#5a5a5a"><path d="M1 6l4-4 7 0v12l-8 4-3-2z" /><path d="M6 8l4-4 7 0v12l-8 4-3-2z" /><path d="M11 10l4-4 7 0v12l-8 4-3-2z" /></g></Tool>
      <Tool label="Organize"><Folder /><path d="M9 8h13l-1 13H8z" fill="#f3c967" stroke="#cf9f3f" /><RedArrow d="M5 10q1 5 5 5v-3l6 5-6 5v-3q-6-1-5-9z" /></Tool>
      <Tool label="Renumber"><T x={10} y={8}>2</T><T x={8} y={15}>1</T><T x={9} y={22}>3</T><path d="M7 3Q2 3 3 8M1 6l2 4 3-3M18 10q4-1 4 3M16 10l3-3v6" stroke="#e01818" strokeWidth="1.800" /></Tool>
      <Grip />
      <Combo label="Geometry color mode" value="Auto" icon={<><g transform="scale(.95)"><Arc /></g><Rainbow /></>} />
      <Tool label="Wireframe geometry"><Arc fill="#fafafa" line="#666" /></Tool><Caret wide />
      <Tool label="Shaded geometry"><Arc /></Tool><Caret wide />
      <Tool label="Transparency"><Cube top="#a9a9ea" front="#8585bd" side="#c3c3da" line="#4a4a7a" /></Tool>
      <Sep />
      <Combo wide label="Element color mode" value="By Comp" icon={<><g transform="translate(2 0) scale(.82)"><GridCube fill={G} /></g><Rainbow /></>} />
      <Tool label="Wireframe elements"><GridCube fill="#fff" line="#555" /></Tool><Caret wide />
      <Tool label="Shaded elements"><GridCube fill={G} /></Tool><Caret wide />
      <Tool label="1D representation"><path d="M5 16l14-8" stroke="#444" strokeWidth="2" /></Tool><Caret wide />
      <Tool label="2D representation"><path d="M1 12l11-6 11 6-11 6z" fill="#777" stroke="#444" /><path d="M6.500 9l11 6M17.500 9l-11 6" stroke="#444" /></Tool><Caret wide />
      <Tool label="Layers"><Slab x={1} y={4} s={1.3} top="#a9a9ff" side="#3c3cff" /></Tool><Caret wide />
      <Tool label="Shrink elements"><g fill={G} stroke="#55559a"><path d="M4 8l5-1v5l-5 1zM13 5l6-1v5l-6 1zM4 16l5-1v5l-5 1zM13 14l6-1v5l-6 1z" /></g></Tool>
      <Tool label="Visualization options"><path d="M2 2h20v15H2z" fill="#5da0dc" stroke="#555" strokeWidth="1.500" /><path d="M2 17h20v2H2zM9 19h6v3H9z" fill="#555" /><path d="M7 23h10" stroke="#444" strokeWidth="2" /></Tool>
      <Grip />
      <Tool label="Favorites"><path d="M12 2l3 7h7l-5 5 2 8-7-4-7 4 2-8-5-5h7z" fill="#fbc916" stroke="#d09a00" /></Tool>
    </div>
  );
}

const COLUMNS = [
  ['assemblies', 'organize', 'color', 'rename', 'reorder', '', 'build menu'],
  ['find', 'mask', 'delete'],
  ['translate', 'rotate', 'scale', 'reflect', 'project', 'position', 'permute'],
  ['check elems', 'edges', 'faces', 'features', 'normals', 'dependency', 'penetration'],
  ['numbers', 'renumber', 'count', 'mass calc', 'tags', 'HyperMorph'],
];
const PAGES = ['Geom', '1D', '2D', '3D', 'Analysis', 'Tool', 'Post'];

function ToolPanel() {
  return (
    <div className="mt-[6px] mb-[3px] grid shrink-0 grid-cols-[273fr_273fr_268fr_260fr_260fr_147fr] border-b-2 border-gray-500 pb-[2px] pl-[2px] text-sm">
      {COLUMNS.map((col) => (
        <div key={col[0]} className="flex flex-col">
          {col.map((name, i) => name
            ? <button key={name} type="button" className="h-5 border-t border-r-2 border-b-2 border-t-white border-r-gray-500 border-b-gray-500 leading-[17px]">{name}</button>
            : <span key={i} className="h-5" />)}
        </div>
      ))}
      <fieldset className="flex flex-col pl-[15px]">
        {PAGES.map((p) => (
          <label key={p} className="flex h-5 items-center gap-[15px]">
            <input
              type="radio"
              name="page"
              defaultChecked={p === 'Tool'}
              className="h-[11px] w-[11px] appearance-none rounded-full border border-t-gray-700 border-r-gray-100 border-b-gray-100 border-l-gray-700 bg-white checked:bg-[radial-gradient(circle,#000_2px,#fff_3px)]"
            />
            {p}
          </label>
        ))}
      </fieldset>
    </div>
  );
}

function StatusBar() {
  const cell = 'flex h-[19px] items-center gap-1 border-t-2 border-l-2 border-gray-800';
  return (
    <footer className="flex h-6 shrink-0 items-center justify-between pl-[14px] text-sm">
      <span>Tools</span>
      <div className="flex gap-[3px] pr-[2px]">
        <div className={clsx(cell, 'w-[123px]')} />
        <div className={clsx(cell, 'w-[123px]')}>Model</div>
        <div className={clsx(cell, 'w-[142px] pl-1')}><i className="h-[10px] w-[10px] border border-black bg-[#0000ff]" />Air</div>
        <div className={clsx(cell, 'w-[141px] pl-1')}><i className="h-[10px] w-[10px] border border-black bg-[#a0a0a0]" />helium</div>
      </div>
    </footer>
  );
}

/* ---------- task bar ---------- */

const APPS: { name: string; open?: boolean; lit?: boolean; icon: ReactNode }[] = [
  { name: 'Internet Explorer', icon: <><path d="M19 14H7q1 5 5 5 3 0 4-2h3q-2 6-7 6-8 0-8-9t8-9q8 0 7 9zM7 11h9q-1-4-4-4t-5 4z" fill="#5cc8fa" stroke="#2a8fd0" strokeWidth=".5" /><path d="M4 21Q-2 23 5 13T20 2q3 0 1 5" stroke="#f6c713" strokeWidth="2" /></> },
  { name: 'Explorer', open: true, icon: <><path d="M2 3h8l1 3h11v15H2z" fill="#e8c667" /><path d="M3 6h19v14H3z" fill="#f9e7a0" stroke="#d6ae4a" strokeWidth=".5" /><path d="M4 4h4" stroke="#2c9a3c" strokeWidth="2" /><path d="M15 5h4" stroke="#2c78c8" strokeWidth="2" /><path d="M5 23v-6q0-2 2-2h10q2 0 2 2v6h-3v-5H8v5z" fill="#8ccbec" stroke="#4f9fcb" strokeWidth=".5" /></> },
  { name: 'Media Player', icon: <><path d="M6 3h14v18H6z" fill="#a9cfe8" stroke="#5f9fc8" /><path d="M3 4h14v18H3z" fill="#cfe6f5" stroke="#5f9fc8" /><circle cx="11" cy="12" r="7" fill="#f08a1c" stroke="#fff" /><path d="M9 8l6 4-6 4z" fill="#fff" /></> },
  { name: 'Chrome', open: true, icon: <><circle cx="12" cy="12" r="11" fill="#fbcb2c" /><path d="M12 12L2.500 6.500A11 11 0 0 1 21.500 6.500z" fill="#dd4b3e" /><path d="M12 12L2.500 6.500A11 11 0 0 0 11 23l5-8z" fill="#2ca05a" /><circle cx="12" cy="12" r="5.500" fill="#fff" /><circle cx="12" cy="12" r="4.200" fill="#4a86ee" /></> },
  { name: 'Word', open: true, icon: <><path d="M12 3h11v18H12z" fill="#fff" stroke="#2b579a" /><path d="M14 7h7M14 10h7M14 13h7M14 16h7" stroke="#2b579a" /><path d="M1 3l13-2v22L1 21z" fill="#2b579a" /><path d="M3.500 8l2 8 2.200-7L10 16l2-8" stroke="#fff" strokeWidth="1.600" /></> },
  { name: 'Zi viewer', open: true, icon: <><path d="M2 2l20-1-1 15L4 18z" fill="#17b0e0" stroke="#111" strokeWidth="1.500" /><path d="M9 17l4 0 5 5-13 1z" fill="#222" /><path d="M14 6h6l-5 8h5" stroke="#fff" strokeWidth="2" /></> },
  { name: 'PDF reader', open: true, icon: <><path d="M6 1h12l4 4v18H6z" fill="#fff" stroke="#aaa" strokeWidth=".5" /><path d="M1 3h15v8H1z" fill="#e02a1e" /><T x={3} y={9} s={6} c="#fff">PDF</T><path d="M9 21q5-4 5-9-1 6 5 8-4-2-10 1z" stroke="#e02a1e" /></> },
  { name: 'HyperMesh', open: true, lit: true, icon: <Sheet fill="#8c8ca8" line="#3c3c55" /> },
  { name: 'HyperWorks', open: true, icon: <><path d="M10 2h4L6 17l-4 2z" fill="#fff" /><path d="M10 2h4l-3 6H7z" fill="#d3203c" /><path d="M14 2l9 18-5-3-5-11z" fill="#fff" /><path d="M17 9l6 11-5-3-3-6z" fill="#1fa5d8" /><path d="M2 19l4-2h12l5 3-3 2H5z" fill="#fff" /><path d="M2 19l4-2h5l-1 5H5z" fill="#f4b619" /></> },
];

const TRAY: { name: string; icon: ReactNode }[] = [
  { name: 'Java', icon: <><path d="M1 1h22v22H1z" fill="#e8762c" /><path d="M12 3q-4 4 0 7M15 6q-4 3-1 6M6 14q6 3 11 0M7 17q5 2 9 0M5 20q8 2 14 0" stroke="#fff" strokeWidth="1.500" /></> },
  { name: 'Safely remove', icon: <><path d="M4 1h8v6H4zM2 7h12v10l-3 5H6l-4-5z" fill="#8a8f94" /><circle cx="17" cy="16" r="7" fill="#27ae3c" /><path d="M13 16l3 3 5-7" stroke="#fff" strokeWidth="2" /></> },
  { name: 'Pen', icon: <><path d="M2 10l6 10M2 20l8-8M1 15h10" stroke="#31a8ee" strokeWidth="2" /><path d="M6 13l12-9 3 5-10 8z" fill="#c2916c" /><path d="M18 9h5v9h-5z" fill="#9fc3e2" /></> },
  { name: 'Printer', icon: <><path d="M7 4h10v8H7z" fill="#fff" stroke="#555" /><path d="M2 12h20v8H2z" fill="#ddd" stroke="#333" /><path d="M2 19h20" stroke="#222" strokeWidth="3" /></> },
  { name: 'Autodesk', icon: <><path d="M2 20L11 3l4 6-5 11z" fill="#2f7ed8" /><path d="M11 3l11 17h-8z" fill="#1db394" /></> },
  { name: 'Licence', icon: <path d="M19 7q-1-5-6-4-5 1-3 7 2 6-4 10h12q2 0 2-3M5 12h10" stroke="#05070c" strokeWidth="4" /> },
  { name: 'Backup', icon: <><circle cx="12" cy="12" r="10" fill="#2f6f8d" stroke="#d9e6ee" strokeWidth="2.500" /><circle cx="12" cy="12" r="5" stroke="#d9e6ee" strokeWidth="2" /></> },
  { name: 'Security', icon: <><path d="M1 1h22v22H1z" fill="#6fbe44" stroke="#d9f0c8" /><path d="M5 5h14v8q-1 5-7 7-6-2-7-7z" fill="#fff" /><path d="M12 5v15M5 11h14" stroke="#6fbe44" strokeWidth="2" /></> },
  { name: 'Ellipse', icon: <ellipse cx="12" cy="12" rx="11" ry="7" fill="#b7822f" stroke="#7a6538" /> },
  { name: 'Action center', icon: <><path d="M4 3v19" stroke="#fff" strokeWidth="2" /><path d="M6 4q6-2 12 1v9q-6-3-12 0z" fill="#fff" /><circle cx="17" cy="17" r="6" fill="#e03030" /><path d="M14 14l6 6M20 14l-6 6" stroke="#fff" strokeWidth="2" /></> },
  { name: 'Network', icon: <><path d="M7 6h15v11H7zM11 21h8M15 17v4M1 3h6v5H1zM4 8v13h7" stroke="#fff" strokeWidth="1.800" /></> },
  { name: 'Volume', icon: <><path d="M2 9h4l6-6v18l-6-6H2z" fill="#fff" /><path d="M15 8q3 4 0 8M18 5q5 7 0 14" stroke="#fff" strokeWidth="1.800" /></> },
];

function TaskBar() {
  return (
    <nav className="flex h-10 shrink-0 items-center justify-between border-t border-[#12304f] bg-[linear-gradient(to_bottom,#ffffff20,transparent_60%,#0a5fae70),linear-gradient(to_right,#185488_0%,#2e88c8_9%,#3f9ad4_20%,#9cc4ea_32%,#a8cbee_52%,#9cc3ec_78%,#174a80_80%,#1b5592_92%,#123c6c_100%)]">
      <div className="flex h-full items-center">
        <button type="button" aria-label="Start" className="flex w-[54px] justify-center">
          <Svg size={37}><circle cx="12" cy="12" r="11.500" fill="url(#orb)" stroke="#a8c8e0" strokeWidth=".6" /><path d="M6 7q3-2 5.500 0l-1 4.500q-3-2-5.500 0z" fill="#ee5a2a" /><path d="M12.500 7.500q3 1.500 5.500 0l-1 4.500q-3 1.500-5.500 0z" fill="#8cc63f" /><path d="M4.800 12.500q3-2 5.500 0l-1 4.500q-3-2-5 0z" fill="#3fa9f5" /><path d="M11.300 13q3 1.500 5.500 0l-1 4.500q-3 1.500-5.500 0z" fill="#fbc92c" /></Svg>
        </button>
        <div className="flex h-full items-center gap-1 pl-1">
          {APPS.map((a) => (
            <button
              key={a.name}
              type="button"
              aria-label={a.name}
              className={clsx('flex h-[38px] w-[58px] items-center justify-center rounded-sm', a.open && 'border border-[#1c4a74] bg-white/30 shadow-[inset_0_0_0_1px_#ffffff80]', a.lit && 'bg-white/60')}
            >
              <Svg size={30}>{a.icon}</Svg>
            </button>
          ))}
        </div>
      </div>
      <div className="flex h-full items-center">
        <div className="flex items-center gap-2 pr-[17px]">
          {TRAY.map((t) => (
            <button key={t.name} type="button" aria-label={t.name}><Svg size={16}>{t.icon}</Svg></button>
          ))}
        </div>
        <div className="w-[60px] text-center text-xs leading-[17px] text-white">
          <time className="block">15:13</time>
          <time className="block">19/04/2018</time>
        </div>
        <button type="button" aria-label="Show desktop" className="ml-3 h-full w-[22px] border border-[#6b8db5] bg-gradient-to-br from-[#5c7fa8] to-[#143a66]" />
      </div>
    </nav>
  );
}

function Gradients() {
  const stops = (cols: string[]) => cols.map((c, i) => <stop key={c} offset={i / (cols.length - 1)} stopColor={c} />);
  return (
    <svg width="0" height="0" className="absolute" aria-hidden="true">
      <defs>
        <linearGradient id="folderGold" x2="1" y2="1">{stops(['#fff0bd', '#e8b650'])}</linearGradient>
        <linearGradient id="folderGray" x2="1" y2="1">{stops(['#e4e4e4', '#9b9b9b'])}</linearGradient>
        <linearGradient id="folderDark" x2="1" y2="1">{stops(['#cacaca', '#707070'])}</linearGradient>
        <linearGradient id="rainbow">{stops(['#f00', '#f0f', '#00f', '#0ff', '#0f0', '#ff0', '#f80'])}</linearGradient>
        <radialGradient id="orb" cy="0.9">{stops(['#4fd0f5', '#1f6aa5', '#4a7496'])}</radialGradient>
      </defs>
    </svg>
  );
}

export default function App() {
  return (
    <div className="flex h-screen flex-col overflow-hidden bg-[#efefef] font-['Liberation_Sans',Arial,sans-serif] text-black">
      <Gradients />
      <TitleBar />
      <div role="menubar" className="flex h-5 shrink-0 items-center gap-px border-b border-[#b4bccf] bg-gradient-to-b from-white via-[#e6eaf5] to-[#d5dcef] pl-px text-xs">
        {MENUS.map((m) => <button key={m} type="button" role="menuitem" className="px-[6px]">{m}</button>)}
      </div>
      <TopToolbar />
      <div className="flex min-h-0 flex-1">
        <Browser />
        <main className="mr-[2px] ml-[5px] flex min-w-0 flex-1 flex-col border-r-2 border-l-2 border-gray-500">
          <div className="flex min-h-0 flex-1">
            <SideTools />
            <Viewport />
          </div>
          <BottomToolbar />
          <ToolPanel />
        </main>
      </div>
      <StatusBar />
      <TaskBar />
    </div>
  );
}
